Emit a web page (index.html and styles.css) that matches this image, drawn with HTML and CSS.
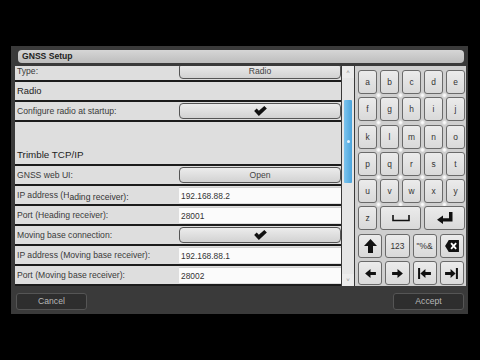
FILE: index.html
```html
<!DOCTYPE html>
<html>
<head>
<meta charset="utf-8">
<link rel="stylesheet" href="styles.css">
</head>
<body>
<div class="window">
  <div class="titlebar">GNSS Setup</div>
  <div class="main">
    <div class="form">
      <div class="rows">
        <div class="row first"><div class="label">Type:</div><div class="value"><div class="btn">Radio</div></div></div>
        <div class="row header"><div class="label">Radio</div></div>
        <div class="row"><div class="label">Configure radio at startup:</div><div class="value"><div class="btn"><svg class="check" viewBox="0 0 14 11" width="13" height="10"><polygon points="0,5.5 2.8,2.8 5.2,5.2 11.2,0 14,2.8 5.2,11"/></svg></div></div></div>
        <div class="row header tall"><div class="label">Trimble TCP/IP</div></div>
        <div class="row"><div class="label">GNSS web UI:</div><div class="value"><div class="btn">Open</div></div></div>
        <div class="row"><div class="label">IP address (H<span class="glitch">ading receiver):</span></div><div class="value"><div class="input">192.168.88.2</div></div></div>
        <div class="row"><div class="label">Port (Heading receiver):</div><div class="value"><div class="input">28001</div></div></div>
        <div class="row"><div class="label">Moving base connection:</div><div class="value"><div class="btn"><svg class="check" viewBox="0 0 14 11" width="13" height="10"><polygon points="0,5.5 2.8,2.8 5.2,5.2 11.2,0 14,2.8 5.2,11"/></svg></div></div></div>
        <div class="row"><div class="label">IP address (Moving base receiver):</div><div class="value"><div class="input">192.168.88.1</div></div></div>
        <div class="row"><div class="label">Port (Moving base receiver):</div><div class="value"><div class="input">28002</div></div></div>
      </div>
    </div>
    <div class="scrollbar">
      <div class="sb-btn">&#708;</div>
      <div class="sb-track"><div class="sb-thumb"><span class="grip"></span></div></div>
      <div class="sb-btn">&#709;</div>
    </div>
    <div class="keyboard">
      <div class="letters">
        <div class="krow five"><div class="key">a</div><div class="key">b</div><div class="key">c</div><div class="key">d</div><div class="key">e</div></div>
        <div class="krow five"><div class="key">f</div><div class="key">g</div><div class="key">h</div><div class="key">i</div><div class="key">j</div></div>
        <div class="krow five"><div class="key">k</div><div class="key">l</div><div class="key">m</div><div class="key">n</div><div class="key">o</div></div>
        <div class="krow five"><div class="key">p</div><div class="key">q</div><div class="key">r</div><div class="key">s</div><div class="key">t</div></div>
        <div class="krow five"><div class="key">u</div><div class="key">v</div><div class="key">w</div><div class="key">x</div><div class="key">y</div></div>
        <div class="krow five">
          <div class="key">z</div>
          <div class="key span2"><svg viewBox="0 0 18 8" width="18" height="8"><path d="M1 1 V6.5 H17 V1" fill="none" stroke="#111" stroke-width="1.6"/></svg></div>
          <div class="key span2"><svg viewBox="0 0 17 12" width="17" height="12"><polygon points="13,0 16.5,0 16.5,9.5 7,9.5 7,12 1,7.8 7,3.6 7,6.2 13,6.2" fill="#111"/></svg></div>
        </div>
      </div>
      <div class="krow four">
        <div class="key"><svg viewBox="0 0 13 14" width="13" height="14"><polygon points="6.5,0 13,7 9,7 9,14 4,14 4,7 0,7" fill="#111"/></svg></div>
        <div class="key">123</div>
        <div class="key">"%&amp;</div>
        <div class="key"><svg viewBox="0 0 15 13" width="14" height="12"><polygon points="4,0 15,0 15,13 4,13 0,6.5" fill="#111"/><path d="M6.5 3.5 L12 9.5 M12 3.5 L6.5 9.5" stroke="#fff" stroke-width="2"/></svg></div>
      </div>
      <div class="krow four">
        <div class="key"><svg viewBox="0 0 12 10" width="11" height="9"><polygon points="0,5 6,0 6,3.3 12,3.3 12,6.7 6,6.7 6,10" fill="#111"/></svg></div>
        <div class="key"><svg viewBox="0 0 12 10" width="11" height="9"><polygon points="12,5 6,0 6,3.3 0,3.3 0,6.7 6,6.7 6,10" fill="#111"/></svg></div>
        <div class="key"><svg viewBox="0 0 14 12" width="13" height="11"><rect x="0" y="0" width="2.2" height="12" fill="#111"/><polygon points="2.5,6 8,1 8,4.3 14,4.3 14,7.7 8,7.7 8,11" fill="#111"/></svg></div>
        <div class="key"><svg viewBox="0 0 14 12" width="13" height="11"><rect x="11.8" y="0" width="2.2" height="12" fill="#111"/><polygon points="11.5,6 6,1 6,4.3 0,4.3 0,7.7 6,7.7 6,11" fill="#111"/></svg></div>
      </div>
    </div>
  </div>
  <div class="footer">
    <div class="fbtn">Cancel</div>
    <div class="fbtn">Accept</div>
  </div>
</div>
</body>
</html>
```

FILE: styles.css
```css
html, body {
  margin: 0;
  padding: 0;
  background: #000;
  width: 480px;
  height: 360px;
  overflow: hidden;
  font-family: "Liberation Sans", Arial, sans-serif;
}
.window {
  margin: 46px 0 0 11px;
  width: 457px;
  height: 268px;
  background: #3a3a3a;
  box-sizing: border-box;
  padding: 4px 1px 0 4px;
  display: flex;
  flex-direction: column;
}
.titlebar {
  margin: 0 3px 0 3px;
  height: 13px;
  background: linear-gradient(#d6d6d6, #bdbdbd);
  border-radius: 4px;
  font-size: 8.6px;
  font-weight: bold;
  color: #222;
  line-height: 13px;
  padding-left: 4px;
}
.main {
  margin-top: 3px;
  height: 220px;
  display: flex;
}
.form {
  width: 326px;
  height: 220px;
  overflow: hidden;
  background: #dedede;
}
.rows {
  margin-top: -4px;
}
.row {
  display: flex;
  height: 18px;
  border-bottom: 2px solid #1c1c1c;
  background: #dedede;
  font-size: 8.6px;
  color: #3a3a3a;
}
.label {
  width: 162px;
  padding-left: 2px;
  line-height: 18px;
  white-space: nowrap;
}
.glitch {
  position: relative;
  top: 2px;
  background: #dedede;
  color: #333;
}
.header .label {
  font-size: 9.4px;
  color: #222;
}
.tall {
  height: 42px;
}
.tall .label {
  line-height: 14px;
  padding-top: 26px;
  font-size: 9.8px;
}
.value {
  width: 162px;
  display: flex;
  align-items: center;
}
.btn {
  box-sizing: border-box;
  width: 162px;
  height: 16px;
  border: 1px solid #555;
  border-radius: 4px;
  background: linear-gradient(#ececec, #d2d2d2);
  display: flex;
  align-items: center;
  justify-content: center;
  color: #444;
  font-size: 8.6px;
}
.check {
  fill: #111;
}
.input {
  box-sizing: border-box;
  width: 162px;
  height: 16px;
  background: #fbfbfb;
  padding-left: 2px;
  line-height: 16px;
  color: #333;
  font-size: 8.4px;
  border-top: 1px solid #cfcfcf;
}
.scrollbar {
  margin-left: 1px;
  width: 12px;
  height: 220px;
  background: #e6e6e6;
  display: flex;
  flex-direction: column;
}
.sb-btn {
  height: 12px;
  font-size: 6px;
  color: #888;
  text-align: center;
  line-height: 12px;
  background: #ececec;
}
.sb-track {
  flex: 1;
  padding: 22px 1px 0 2px;
}
.sb-thumb {
  width: 8px;
  height: 83px;
  background: linear-gradient(90deg, #7cc4ee, #4aa4dc);
  border-radius: 1px;
  display: flex;
  align-items: center;
  justify-content: center;
}
.grip {
  width: 3px;
  height: 3px;
  border-radius: 50%;
  background: #e8f4fc;
}
.keyboard {
  margin-left: 1px;
  width: 111px;
  height: 220px;
  box-sizing: border-box;
  background: #cfcfcf;
  padding: 4px 2px 0 3px;
  display: flex;
  flex-direction: column;
  gap: 3.3px;
}
.letters {
  display: flex;
  flex-direction: column;
  gap: 3.3px;
  background-image: radial-gradient(circle at center, #fafafa 0 1.4px, rgba(250,250,250,0) 2.2px);
  background-size: 22px 27.3px;
  background-position: 9.5px 11.65px;
}
.krow {
  display: grid;
  gap: 3px;
  height: 24px;
}
.five {
  grid-template-columns: repeat(5, 19px);
}
.four {
  grid-template-columns: repeat(4, 1fr);
}
.key {
  box-sizing: border-box;
  border: 1px solid #6a6a6a;
  border-radius: 3px;
  background: linear-gradient(#ebebeb, #d9d9d9);
  display: flex;
  align-items: center;
  justify-content: center;
  font-size: 8.4px;
  color: #333;
}
.span2 {
  grid-column: span 2;
}
.footer {
  height: 28px;
  display: flex;
  justify-content: space-between;
  align-items: flex-start;
  padding: 7px 3px 0 1px;
}
.fbtn {
  box-sizing: border-box;
  width: 71px;
  height: 17px;
  background: #2e2e2e;
  border: 1px solid #555;
  border-radius: 3px;
  color: #b8b8b8;
  font-size: 8.6px;
  line-height: 15px;
  text-align: center;
}
```
